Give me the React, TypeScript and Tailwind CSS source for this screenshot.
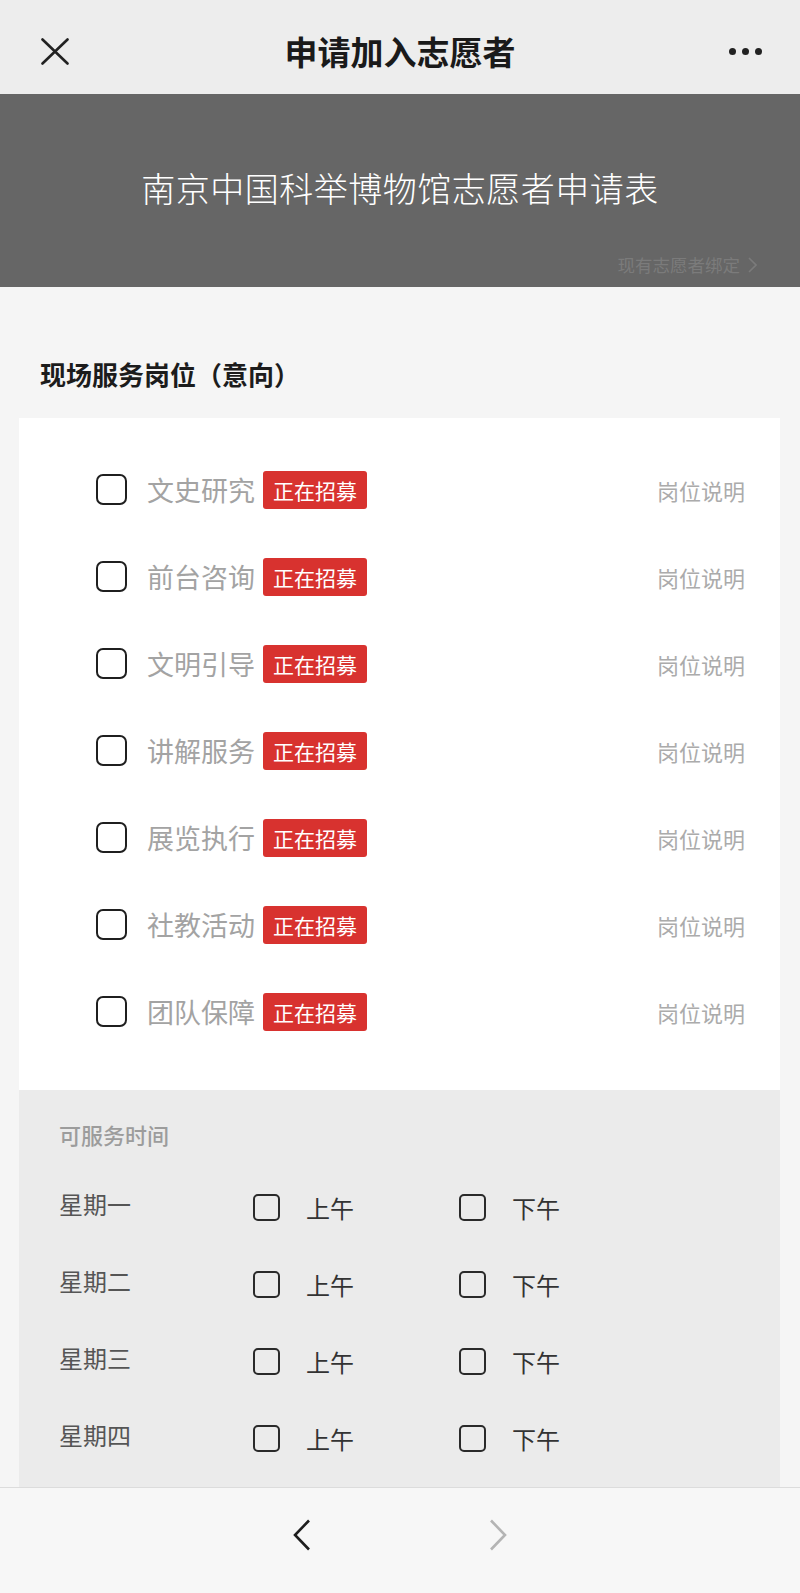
import React from "react";

const positions = ["文史研究", "前台咨询", "文明引导", "讲解服务", "展览执行", "社教活动", "团队保障"];
const days = ["星期一", "星期二", "星期三", "星期四"];

function Box({ size }: { size: "lg" | "sm" }) {
  return size === "lg" ? (
    <span className="block w-[31px] h-[31px] shrink-0 rounded-[7px] border-2 border-[#1f1f1f] bg-white" />
  ) : (
    <span className="block w-[27px] h-[27px] shrink-0 rounded-[5px] border-2 border-[#2a2a2a]" />
  );
}

export default function App() {
  return (
    <div className="w-[800px] h-[1593px] flex flex-col bg-[#f5f5f5] font-['Noto_Sans_CJK_SC',sans-serif] overflow-hidden">
      {/* Top nav */}
      <div className="h-[94px] shrink-0 bg-[#ededed] grid grid-cols-[1fr_auto_1fr] items-center px-[41px] pt-[8px]">
        <svg width="28" height="27" viewBox="0 0 28 27" className="justify-self-start">
          <path d="M1.5 1.5 L26.5 25.5 M26.5 1.5 L1.5 25.5" stroke="#222" strokeWidth="2.6" strokeLinecap="round" />
        </svg>
        <div className="text-[33px] leading-[40px] font-bold text-[#1a1a1a]">申请加入志愿者</div>
        <div className="justify-self-end flex items-center gap-[6px] mr-[-3px]">
          <span className="block w-[7px] h-[7px] rounded-full bg-[#222]" />
          <span className="block w-[7px] h-[7px] rounded-full bg-[#222]" />
          <span className="block w-[7px] h-[7px] rounded-full bg-[#222]" />
        </div>
      </div>

      {/* Banner */}
      <div className="h-[193px] shrink-0 bg-[#666666] flex flex-col">
        <div className="pt-[70px] text-center text-[34px] leading-[48px] font-light text-white tracking-[0.5px]">
          南京中国科举博物馆志愿者申请表
        </div>
        <div className="mt-auto mb-[10px] flex justify-end items-center gap-[8px] pr-[43px] text-[17.5px] leading-[24px] text-[#7b7b7b]">
          <span>现有志愿者绑定</span>
          <svg width="9" height="16" viewBox="0 0 9 16">
            <path d="M1 1 L8 8 L1 15" fill="none" stroke="#7b7b7b" strokeWidth="1.6" />
          </svg>
        </div>
      </div>

      {/* Main */}
      <div className="flex-1 overflow-hidden flex flex-col">
        <div className="pt-[69px] pb-[26px] pl-[40px] text-[26px] leading-[36px] font-bold text-[#1c1c1c]">
          现场服务岗位（意向）
        </div>

        <div className="ml-[19px] mr-[20px] bg-white pt-[28px] pb-[35px]">
          {positions.map((p) => (
            <div key={p} className="h-[87px] flex items-center pl-[77px] pr-[35px]">
              <Box size="lg" />
              <span className="ml-[20px] text-[27px] leading-[36px] text-[#a3a3a3]">{p}</span>
              <span className="ml-[8px] h-[38px] px-[10px] flex items-center rounded-[3px] bg-[#d8322f] text-white text-[21px] leading-[28px]">
                正在招募
              </span>
              <span className="ml-auto text-[22px] leading-[30px] text-[#ababab]">岗位说明</span>
            </div>
          ))}
        </div>

        <div className="ml-[19px] mr-[20px] flex-1 bg-[#ebebeb] pt-[29px] pl-[40px]">
          <div className="text-[22px] leading-[30px] font-medium text-[#9c9c9c] mb-[20px]">可服务时间</div>
          {days.map((d) => (
            <div key={d} className="h-[77px] flex items-center">
              <span className="w-[194px] mb-[8px] text-[24px] leading-[32px] text-[#555]">{d}</span>
              <div className="w-[206px] flex items-center">
                <Box size="sm" />
                <span className="ml-[26px] text-[24px] leading-[32px] text-[#333]">上午</span>
              </div>
              <div className="flex items-center">
                <Box size="sm" />
                <span className="ml-[26px] text-[24px] leading-[32px] text-[#333]">下午</span>
              </div>
            </div>
          ))}
        </div>
      </div>

      {/* Bottom bar */}
      <div className="h-[106px] shrink-0 bg-[#f7f7f7] border-t border-[#dcdcdc] flex items-center justify-center gap-[178px] pb-[12px]">
        <svg width="18" height="32" viewBox="0 0 18 32">
          <path d="M16 1.5 L2 16 L16 30.5" fill="none" stroke="#1e1e1e" strokeWidth="2.6" />
        </svg>
        <svg width="18" height="32" viewBox="0 0 18 32">
          <path d="M2 1.5 L16 16 L2 30.5" fill="none" stroke="#b4b4b4" strokeWidth="2.6" />
        </svg>
      </div>
    </div>
  );
}
